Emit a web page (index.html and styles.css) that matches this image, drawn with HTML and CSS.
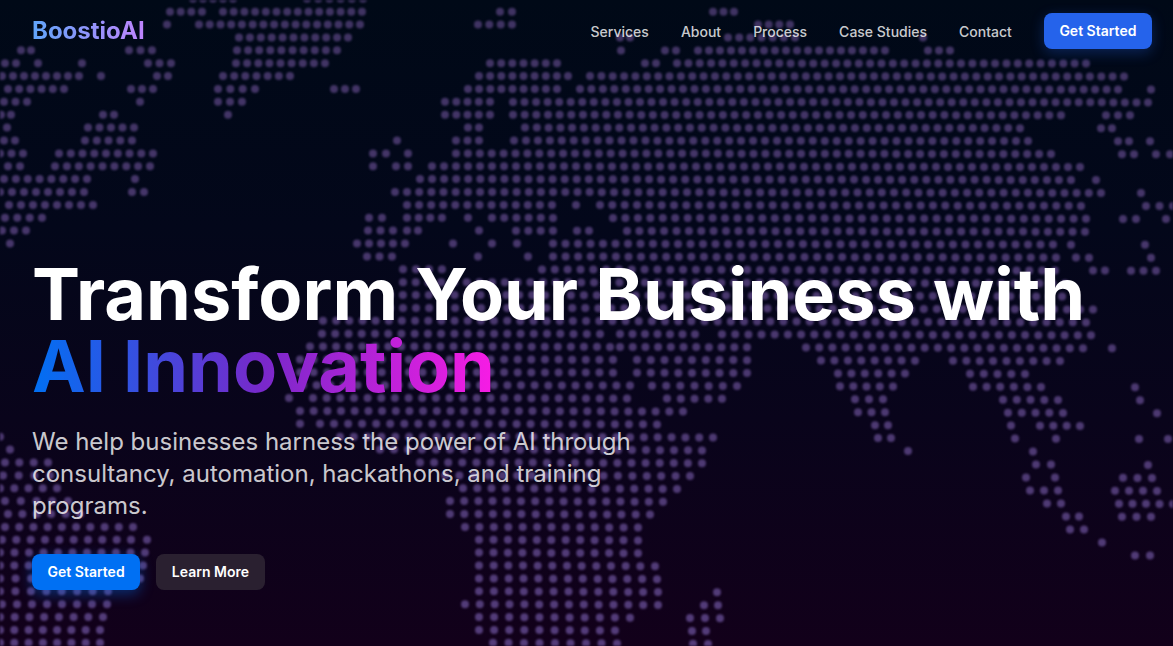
FILE: index.html
```html
<!DOCTYPE html>
<html lang="en">
<head>
    <meta charset="UTF-8">
    <meta name="viewport" content="width=device-width, initial-scale=1.0">
    <title>BoostioAI</title>
    <link rel="stylesheet" href="styles.css">
</head>
<body>
    <svg id="world-map" class="world-map" width="1173" height="646" viewBox="0 0 1173 646" aria-hidden="true">
        <defs>
            <linearGradient id="dot-fade" gradientUnits="userSpaceOnUse" x1="0" y1="0" x2="0" y2="646">
                <stop offset="0" stop-color="#3f3362"/>
                <stop offset="1" stop-color="#543c7a"/>
            </linearGradient>
        </defs>
        <path id="world-dots" class="world-dots" stroke="url(#dot-fade)"/>
    </svg>

    <nav class="navbar">
        <a class="logo" href="#">BoostioAI</a>
        <div class="nav-links">
            <a href="#">Services</a>
            <a href="#">About</a>
            <a href="#">Process</a>
            <a href="#">Case Studies</a>
            <a href="#">Contact</a>
            <a class="btn btn-nav" href="#">Get Started</a>
        </div>
    </nav>

    <section class="hero">
        <h1>Transform Your Business with <span class="accent">AI Innovation</span></h1>
        <p>We help businesses harness the power of AI through consultancy, automation, hackathons, and training programs.</p>
        <div class="hero-buttons">
            <a class="btn btn-primary" href="#">Get Started</a>
            <a class="btn btn-dark" href="#">Learn More</a>
        </div>
    </section>

    <script src="map.js"></script>
</body>
</html>
```
FILE: styles.css
```css
* {
    box-sizing: border-box;
}

html, body {
    margin: 0;
    height: 100%;
}

body {
    position: relative;
    overflow: hidden;
    font-family: Inter, "Liberation Sans", sans-serif;
    color: #fff;
    background: linear-gradient(180deg, #000917 0%, #03071a 35%, #09041b 65%, #12001a 100%);
}

a {
    color: inherit;
    text-decoration: none;
}

.world-map {
    position: absolute;
    top: 0;
    left: 0;
    filter: blur(1.3px);
}

.world-dots {
    fill: none;
    stroke-width: 8;
    stroke-linecap: round;
}

.navbar {
    position: relative;
    display: flex;
    justify-content: space-between;
    align-items: center;
    padding: 13px 21px 0 32px;
}

.logo {
    font-size: 24px;
    font-weight: 700;
    line-height: 36px;
    background: linear-gradient(90deg, #60a5fa, #c084fc);
    -webkit-background-clip: text;
    background-clip: text;
    color: transparent;
}

.nav-links {
    display: flex;
    align-items: center;
    gap: 32px;
    font-size: 14px;
    font-weight: 500;
    color: rgba(255, 255, 255, 0.8);
}

.btn {
    display: block;
    height: 36px;
    padding: 0 15.6px;
    border-radius: 8px;
    font-size: 14px;
    font-weight: 600;
    line-height: 36px;
    color: #fff;
}

.btn-nav {
    background: #2563eb;
    box-shadow: 0 4px 14px rgba(37, 99, 235, 0.3);
}

.btn-primary {
    background: #0070f3;
    box-shadow: 0 4px 14px rgba(0, 118, 255, 0.39);
}

.btn-dark {
    background: #2a2030;
}

.hero {
    position: relative;
    padding: 209px 32px 0;
}

.hero h1 {
    margin: 0;
    font-size: 72px;
    font-weight: 700;
    line-height: 72px;
}

.accent {
    display: inline-block;
    background: linear-gradient(90deg, #0070f3, #7928ca 50%, #f81ce5);
    -webkit-background-clip: text;
    background-clip: text;
    color: transparent;
}

.hero p {
    max-width: 672px;
    margin: 24px 0 32px;
    font-size: 24px;
    line-height: 32px;
    color: rgba(255, 255, 255, 0.8);
}

.hero-buttons {
    display: flex;
    gap: 16px;
}
```
FILE: map.js
```js
// dots of the map, one string per row, as x ranges in pixels ("from-to" or a lone dot)
const rows = [
    "193-233 307-363",
    "170-202 223-362 500-512 713-734",
    "167 199-360 478-512 758-790",
    "239-348 620-630 728-795 923",
    "21-31 129-152 237-337 621 665-676 698-885 928-950",
    "5-16 38 82 148-171 236-325 490-557 645-656 677-1086",
    "2-79 101 157-168 223-290 479-568 590-1124",
    "8-64 131-153 218-255 334-356 468-557 580-1118 1151",
    "4-27 140 218-242 445-490 513-1148",
    "1-11 103-114 228 445-490 513-1061 1106-1130",
    "7 88-134 468-479 525-1020 1101-1112",
    "4-15 85-132 397 456-479 514-1028 1118-1129 1150",
    "0-23 59-153 373-386 408 456-1051 1122-1134 1156-1170",
    "8-20 55-150 373 396 408 432-1080",
    "4-87 135 420-1071 1096",
    "0-84 132-144 395 407-1101 1141",
    "9-93 407-552 576 600-1081 1146-1173",
    "5-42 369-382 407-442 468 492-553 613-1086 1123-1136 1166",
    "2-26 368-393 407-418 479 516-553 577-589 627-1085",
    "10 357-405 453 492 517 553-1053 1071 1145",
    "367-392 478 528 553-1056 1076-1089 1151",
    "403-442 542-1055 1093-1105 1131-1156",
    "403-1065",
    "390-1075",
    "390-1093",
    "323-1086",
    "322-600 620-695 722-1091",
    "310-610 620-747 806-1083 1112",
    "300-613 637-747 821-915 953-1060",
    "300-613 637-747 838-905 970-1025",
    "303-630 652-737 840-893 973-1041 1135",
    "289 313-627 667-722 855-883 1003-1058 1140",
    "300-683 858-885 1008-1063 1157",
    "300 320-657 875-888 1011 1040-1080",
    "0 340-713 878-891 1015 1056 1139 1168",
    "10 380-702 908 1033",
    "5-48 420-702 1036-1051 1148",
    "3-50 445-690 1026 1055 1123-1152",
    "0-57 463-677 1030-1058 1115-1157",
    "5-68 450-663 1047-1061 1119-1173",
    "8-80 450-650 1066-1079 1122-1151",
    "5-133 465-638 1070-1084",
    "2-131 147 479-638 1102",
    "0-145 479-638 1135-1150",
    "0-143 479-655",
    "0-140 479-657",
    "0-108 479-658 717",
    "2-107 465-658 704-718",
    "0-103 479-630 690-720",
    "0-100 479-615 692-706",
    "0-100 493-617 693-708"
];

let d = "";

rows.forEach(function(row, i) {
    const y = -1.2 + 12.88 * i;
    // the grid widens towards the bottom of the picture
    const step = 0.00675 * (y + 1620);

    row.split(" ").forEach(function(range) {
        const parts = range.split("-").map(Number);
        const from = parts[0];
        const to = parts.length > 1 ? parts[1] : from;
        const count = Math.round((to - from) / step);

        for (let n = 0; n <= count; n++) {
            const x = count ? from + (to - from) * n / count : from;
            const sag = Math.max(0, x - 500) * y * 0.0000083;
            d += "M" + x.toFixed(1) + " " + (y + sag).toFixed(1) + "h0";
        }
    });
});

document.getElementById("world-dots").setAttribute("d", d);
```
